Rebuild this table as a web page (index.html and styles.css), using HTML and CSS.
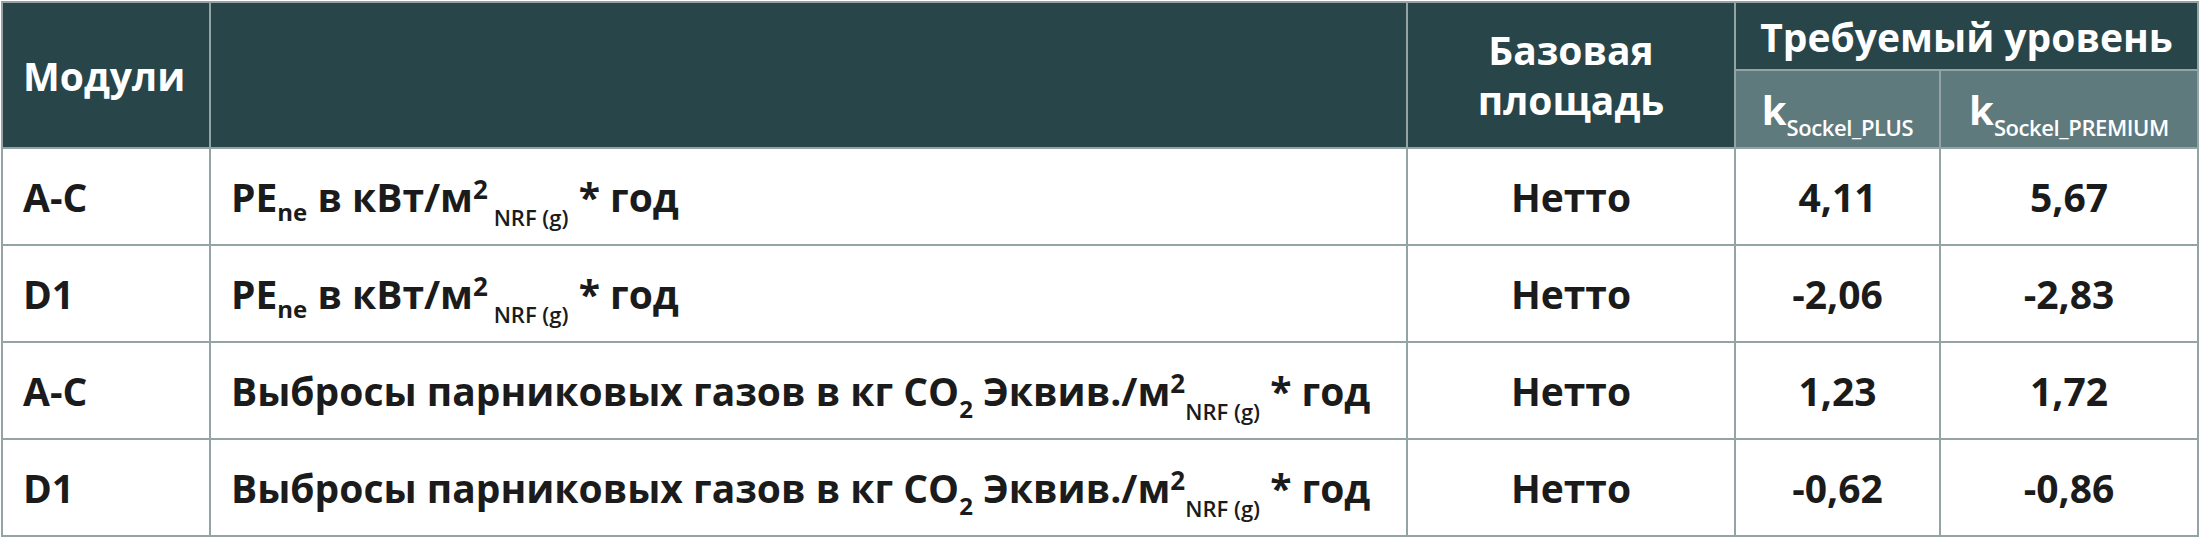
FILE: index.html
```html
<!DOCTYPE html>
<html lang="ru">
<head>
<meta charset="utf-8">
<title>Требуемый уровень</title>
<link rel="stylesheet" href="styles.css">
</head>
<body>
<table class="req-table">
  <colgroup>
    <col class="c-mod">
    <col class="c-desc">
    <col class="c-base">
    <col class="c-plus">
    <col class="c-prem">
  </colgroup>
  <thead>
    <tr class="head-top">
      <th rowspan="2" class="left">Модули</th>
      <th rowspan="2"></th>
      <th rowspan="2" class="base">Базовая<br>площадь</th>
      <th colspan="2" class="level">Требуемый уровень</th>
    </tr>
    <tr class="head-sub">
      <th class="sub">k<sub>Sockel_PLUS</sub></th>
      <th class="sub">k<sub>Sockel_PREMIUM</sub></th>
    </tr>
  </thead>
  <tbody>
    <tr>
      <td class="left">A-C</td>
      <td class="left">PE<sub class="s-ne">ne</sub> в кВт/м<sup>2</sup><sub class="s-nrf">&nbsp;NRF (g)</sub> * год</td>
      <td>Нетто</td>
      <td>4,11</td>
      <td>5,67</td>
    </tr>
    <tr>
      <td class="left">D1</td>
      <td class="left">PE<sub class="s-ne">ne</sub> в кВт/м<sup>2</sup><sub class="s-nrf">&nbsp;NRF (g)</sub> * год</td>
      <td>Нетто</td>
      <td>-2,06</td>
      <td>-2,83</td>
    </tr>
    <tr>
      <td class="left">A-C</td>
      <td class="left">Выбросы парниковых газов в кг CO<sub class="s-two">2</sub> Эквив./м<sup>2</sup><sub class="s-nrf">NRF (g)</sub> * год</td>
      <td>Нетто</td>
      <td>1,23</td>
      <td>1,72</td>
    </tr>
    <tr>
      <td class="left">D1</td>
      <td class="left">Выбросы парниковых газов в кг CO<sub class="s-two">2</sub> Эквив./м<sup>2</sup><sub class="s-nrf">NRF (g)</sub> * год</td>
      <td>Нетто</td>
      <td>-0,62</td>
      <td>-0,86</td>
    </tr>
  </tbody>
</table>
</body>
</html>
```
FILE: styles.css
```css
html, body {
  margin: 0;
  padding: 0;
  background: #ffffff;
}

body {
  padding: 1px 0 0 1px;
}

.req-table {
  border-collapse: collapse;
  table-layout: fixed;
  width: 2196px;
  font-family: "Open Sans", "Liberation Sans", sans-serif;
  font-weight: 700;
  font-size: 39px;
  color: #1b1b1b;
  letter-spacing: 0;
}

.c-mod { width: 208px; }
.c-desc { width: 1197px; }
.c-base { width: 328px; }
.c-plus { width: 205px; }
.c-prem { width: 258px; }

.req-table th,
.req-table td {
  border: 2px solid #94a3a3;
  padding: 0;
  text-align: center;
  vertical-align: middle;
}

.req-table .left {
  text-align: left;
  padding-left: 20px;
}

thead th {
  background: #28464a;
  color: #ffffff;
}

.head-top {
  height: 68px;
}

.head-sub {
  height: 78px;
}

.base {
  line-height: 50px;
}

.level {
  border-bottom-color: #28464a;
}

th.sub {
  background: #5f7a7d;
  font-size: 40px;
  font-weight: 700;
}

th.sub sub {
  font-size: 22px;
  vertical-align: -11px;
  letter-spacing: -0.4px;
  font-weight: 600;
}

tbody tr {
  height: 97px;
}

sub, sup {
  line-height: 0;
}

.s-ne {
  font-size: 24px;
  vertical-align: -9px;
}

.s-two {
  font-size: 24px;
  vertical-align: -12px;
}

sup {
  font-size: 26px;
  vertical-align: 13px;
}

.s-nrf {
  font-size: 22px;
  vertical-align: -14px;
  font-weight: 600;
}
```
